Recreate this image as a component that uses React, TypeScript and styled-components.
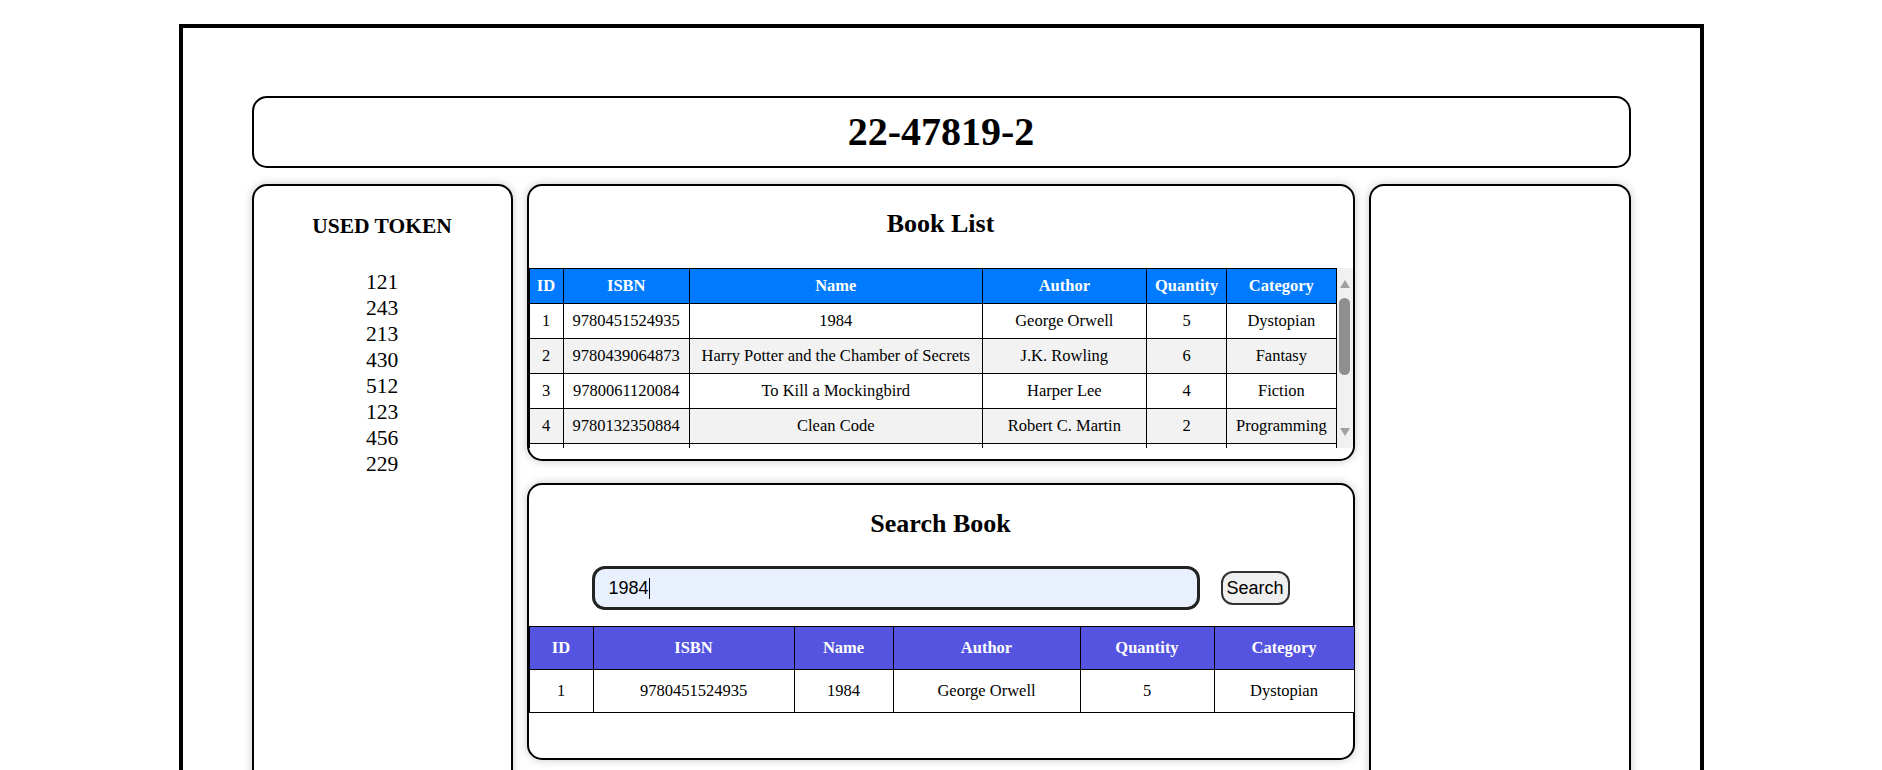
import React from "react";
import styled, { createGlobalStyle } from "styled-components";

const GlobalStyle = createGlobalStyle`
  html, body {
    margin: 0;
    padding: 0;
    overflow: hidden;
    background: #ffffff;
    font-family: "Liberation Serif", "Times New Roman", serif;
    color: #000;
  }
  * { box-sizing: border-box; }
`;

const Page = styled.div`
  padding-top: 24px;
  height: 770px;
`;

const Frame = styled.main`
  width: 1525px;
  height: 820px;
  margin: 0 auto;
  border: 4px solid #000;
  padding: 68px 69px 0;
`;

const HeaderBox = styled.header`
  border: 2px solid #000;
  border-radius: 15px;
  padding: 11px 0;
  text-align: center;
`;

const MainTitle = styled.h1`
  margin: 0;
  font-size: 40px;
  line-height: 46px;
  font-weight: bold;
`;

const Columns = styled.div`
  margin-top: 16px;
  display: grid;
  grid-template-columns: 261px 828px 1fr;
  column-gap: 14px;
  align-items: start;
`;

const SidePanel = styled.aside`
  height: 640px;
  border: 2px solid #000;
  border-radius: 15px;
  box-shadow: 0 0 10px rgba(0, 0, 0, 0.22);
  padding-top: 28px;
  text-align: center;
  background: #fff;
`;

const SideTitle = styled.h3`
  margin: 0 0 30px;
  font-size: 21.5px;
  line-height: 25px;
  font-weight: bold;
`;

const TokenList = styled.div`
  font-size: 21.5px;
  line-height: 26px;
`;

const MiddleColumn = styled.section`
  display: flex;
  flex-direction: column;
  gap: 22px;
`;

const Card = styled.div<{ $pt: number; $pb: number }>`
  height: 277px;
  border: 2px solid #000;
  border-radius: 15px;
  box-shadow: 0 0 10px rgba(0, 0, 0, 0.22);
  padding: ${(p) => p.$pt}px 0 ${(p) => p.$pb}px;
  background: #fff;
`;

const CardTitle = styled.h2<{ $mb: number }>`
  margin: 0 0 ${(p) => p.$mb}px;
  font-size: 26px;
  line-height: 30px;
  font-weight: bold;
  text-align: center;
`;

const Scroller = styled.div`
  height: 180px;
  display: flex;
  overflow: hidden;
`;

const Viewport = styled.div`
  flex: 1;
  min-width: 0;
  overflow: hidden;
`;

const ScrollBar = styled.div`
  width: 16px;
  flex: none;
  background: #f1f1f1;
  display: flex;
  flex-direction: column;
  align-items: center;
`;

const ArrowButton = styled.div<{ $pad: string }>`
  height: 28px;
  width: 16px;
  flex: none;
  display: flex;
  justify-content: center;
  padding: ${(p) => p.$pad};
`;

const Track = styled.div`
  flex: 1;
  width: 16px;
  display: flex;
  justify-content: center;
  padding-top: 2px;
`;

const Thumb = styled.div`
  width: 11px;
  height: 77px;
  border-radius: 6px;
  background: #8f8f8f;
`;

const Table = styled.table`
  width: 100%;
  border-collapse: collapse;
  table-layout: fixed;
  font-size: 16.5px;
`;

const HeadCell = styled.th<{ $bg: string; $pad: number }>`
  background: ${(p) => p.$bg};
  color: #fff;
  font-weight: bold;
  border: 1px solid #000;
  padding: ${(p) => p.$pad}px 0;
  line-height: 18px;
  text-align: center;
  white-space: nowrap;
`;

const Row = styled.tr<{ $striped?: boolean }>`
  background: ${(p) => (p.$striped ? "#f2f2f2" : "#ffffff")};
`;

const Cell = styled.td<{ $pad: number }>`
  border: 1px solid #000;
  padding: ${(p) => p.$pad}px 0;
  line-height: 18px;
  text-align: center;
  white-space: nowrap;
`;

const SearchBar = styled.div`
  display: flex;
  justify-content: center;
  align-items: center;
  gap: 21px;
  margin-bottom: 16px;
`;

const InputWrap = styled.div`
  position: relative;
`;

const SearchInput = styled.input`
  display: block;
  width: 608px;
  height: 44px;
  border: 3px solid #222;
  border-radius: 13px;
  background: #e8f0fe;
  padding: 0 14px;
  font-family: "Liberation Sans", Arial, sans-serif;
  font-size: 18px;
  color: #000;
  outline: none;
`;

const Caret = styled.span`
  position: absolute;
  left: 57px;
  top: 12px;
  width: 1px;
  height: 21px;
  background: #000;
`;

const SearchButton = styled.button`
  width: 69px;
  height: 34px;
  border: 2px solid #333;
  border-radius: 12px;
  background: #efefef;
  padding: 0;
  font-family: "Liberation Sans", Arial, sans-serif;
  font-size: 18px;
  color: #000;
`;

type Book = {
  id: number;
  isbn: string;
  name: string;
  author: string;
  qty: number;
  category: string;
};

const books: Book[] = [
  { id: 1, isbn: "9780451524935", name: "1984", author: "George Orwell", qty: 5, category: "Dystopian" },
  { id: 2, isbn: "9780439064873", name: "Harry Potter and the Chamber of Secrets", author: "J.K. Rowling", qty: 6, category: "Fantasy" },
  { id: 3, isbn: "9780061120084", name: "To Kill a Mockingbird", author: "Harper Lee", qty: 4, category: "Fiction" },
  { id: 4, isbn: "9780132350884", name: "Clean Code", author: "Robert C. Martin", qty: 2, category: "Programming" },
  { id: 5, isbn: "9780743273565", name: "The Great Gatsby", author: "F. Scott Fitzgerald", qty: 3, category: "Classic" },
  { id: 6, isbn: "9780141439518", name: "Pride and Prejudice", author: "Jane Austen", qty: 7, category: "Romance" },
  { id: 7, isbn: "9780547928227", name: "The Hobbit", author: "J.R.R. Tolkien", qty: 5, category: "Fantasy" },
];

const tokens = [121, 243, 213, 430, 512, 123, 456, 229];
const headers = ["ID", "ISBN", "Name", "Author", "Quantity", "Category"];
const listCols = [34, 126, 292, 164, 80, 109];
const searchCols = [64, 201, 99, 187, 134, 140];

const BookTable: React.FC<{
  rows: Book[];
  cols: number[];
  headBg: string;
  pad: number;
  striped: boolean;
}> = ({ rows, cols, headBg, pad, striped }) => (
  <Table>
    <colgroup>
      {cols.map((w, i) => (
        <col key={i} style={{ width: w }} />
      ))}
    </colgroup>
    <thead>
      <tr>
        {headers.map((h) => (
          <HeadCell key={h} $bg={headBg} $pad={pad}>
            {h}
          </HeadCell>
        ))}
      </tr>
    </thead>
    <tbody>
      {rows.map((b, i) => (
        <Row key={b.id} $striped={striped && i % 2 === 1}>
          <Cell $pad={pad}>{b.id}</Cell>
          <Cell $pad={pad}>{b.isbn}</Cell>
          <Cell $pad={pad}>{b.name}</Cell>
          <Cell $pad={pad}>{b.author}</Cell>
          <Cell $pad={pad}>{b.qty}</Cell>
          <Cell $pad={pad}>{b.category}</Cell>
        </Row>
      ))}
    </tbody>
  </Table>
);

const FakeScrollBar: React.FC = () => (
  <ScrollBar>
    <ArrowButton $pad="12px 0 0">
      <svg width="10" height="8" viewBox="0 0 10 8">
        <path d="M5 0 L10 8 L0 8 Z" fill="#a0a0a0" />
      </svg>
    </ArrowButton>
    <Track>
      <Thumb />
    </Track>
    <ArrowButton $pad="8px 0 0">
      <svg width="10" height="8" viewBox="0 0 10 8">
        <path d="M0 0 L10 0 L5 8 Z" fill="#a0a0a0" />
      </svg>
    </ArrowButton>
  </ScrollBar>
);

export default function App() {
  return (
    <>
      <GlobalStyle />
      <Page>
        <Frame>
          <HeaderBox>
            <MainTitle>22-47819-2</MainTitle>
          </HeaderBox>
          <Columns>
            <SidePanel>
              <SideTitle>USED TOKEN</SideTitle>
              <TokenList>
                {tokens.map((t, i) => (
                  <div key={i}>{t}</div>
                ))}
              </TokenList>
            </SidePanel>
            <MiddleColumn>
              <Card $pt={23} $pb={11}>
                <CardTitle $mb={29}>Book List</CardTitle>
                <Scroller>
                  <Viewport>
                    <BookTable rows={books} cols={listCols} headBg="#007bff" pad={8} striped />
                  </Viewport>
                  <FakeScrollBar />
                </Scroller>
              </Card>
              <Card $pt={24} $pb={0}>
                <CardTitle $mb={27}>Search Book</CardTitle>
                <SearchBar>
                  <InputWrap>
                    <SearchInput defaultValue="1984" readOnly />
                    <Caret />
                  </InputWrap>
                  <SearchButton>Search</SearchButton>
                </SearchBar>
                <BookTable rows={[books[0]]} cols={searchCols} headBg="#5454e0" pad={12} striped={false} />
              </Card>
            </MiddleColumn>
            <SidePanel />
          </Columns>
        </Frame>
      </Page>
    </>
  );
}
